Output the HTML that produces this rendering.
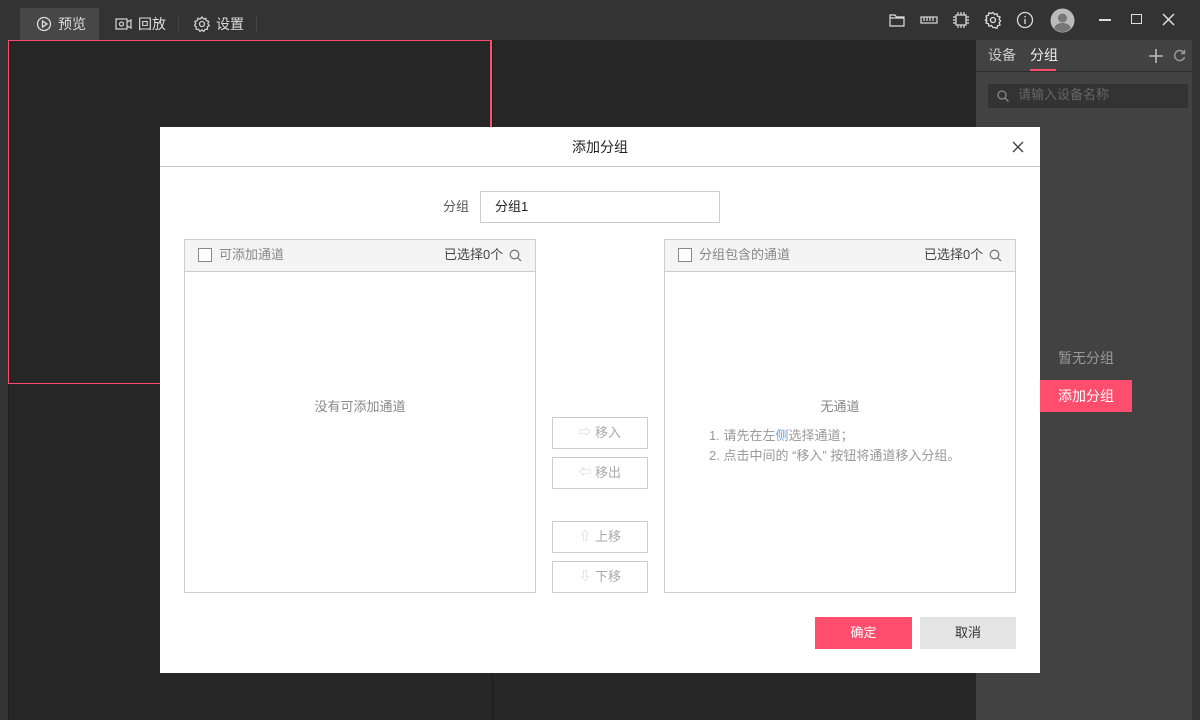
<!DOCTYPE html>
<html><head><meta charset="utf-8"><style>
*{margin:0;padding:0;box-sizing:border-box}
body{width:1200px;height:720px;overflow:hidden;background:#262626;font-family:"Liberation Sans","Noto Sans CJK SC",sans-serif;font-size:13px;line-height:1.3;position:relative}
.a{position:absolute}
.top{left:0;top:0;width:1200px;height:40px;background:#333}
.tab{top:8px;height:32px;color:#ddd;font-size:14px;display:flex;align-items:center;gap:6px}
.sep{top:16px;width:1px;height:16px;background:#444}
.ic{top:11px;width:18px;height:18px}
.dlg{left:160px;top:127px;width:880px;height:546px;background:#fff}
.btn{left:392px;width:96px;height:32px;border:1px solid #ccc;color:#aaa;display:flex;align-items:center;justify-content:center;gap:4px;font-size:13px}
.box{width:352px;height:354px;border:1px solid #ccc;top:112px}
.hd{left:0;top:0;width:350px;height:32px;background:#f4f4f4;border-bottom:1px solid #ccc}
.cb{left:13px;top:8px;width:14px;height:14px;border:1px solid #888;background:#fff}
</style></head><body>
<div class="a top"></div>
<div class="a" style="left:20px;top:8px;width:79px;height:32px;background:#474747"></div>
<div class="a tab" style="left:36px"><svg width="16" height="16" viewBox="0 0 16 16" fill="none" stroke="#ddd" stroke-width="1.3"><circle cx="8" cy="8" r="6.5"/><path d="M6.5 5v6l4.5-3z"/></svg>预览</div>
<div class="a tab" style="left:115px"><svg width="17" height="14" viewBox="0 0 17 14" fill="none" stroke="#ccc" stroke-width="1.3"><rect x="1" y="2" width="11" height="10"/><circle cx="6.5" cy="7" r="2"/><path d="M12 5l4-2v8l-4-2"/></svg>回放</div>
<div class="a sep" style="left:178px"></div>
<div class="a tab" style="left:194px"><svg width="16" height="16" viewBox="0 0 16 16" fill="none" stroke="#ccc" stroke-width="1.3"><circle cx="8" cy="8" r="2.5"/><path d="M8 1l1.5 2 2.3-.7.6 2.3 2.3.8-.8 2.3 1.4 1.9-2 1.3.1 2.4-2.4.1-1.2 2.1L8 13.9 6 15.5 4.6 13.4l-2.4-.1.1-2.4-2-1.3 1.4-1.9-.8-2.3 2.3-.8.6-2.3 2.3.7z"/></svg>设置</div>
<div class="a sep" style="left:256px"></div>
<svg class="a ic" style="left:888px" viewBox="0 0 18 18" fill="none" stroke="#ddd" stroke-width="1.2"><path d="M2 4h5l1.5 2H16v9H2z M2 7h14"/></svg>
<svg class="a ic" style="left:920px" viewBox="0 0 18 18" fill="none" stroke="#ddd" stroke-width="1.2"><rect x="1" y="6" width="16" height="6"/><path d="M4 6v4M7 6v4M10 6v4M13 6v4"/></svg>
<svg class="a ic" style="left:952px" viewBox="0 0 18 18" fill="none" stroke="#ddd" stroke-width="1.2"><rect x="4" y="4" width="10" height="10"/><path d="M6 1v3M9 1v3M12 1v3M6 14v3M9 14v3M12 14v3M1 6h3M1 9h3M1 12h3M14 6h3M14 9h3M14 12h3"/></svg>
<svg class="a ic" style="left:984px" viewBox="0 0 18 18" fill="none" stroke="#ddd" stroke-width="1.3"><circle cx="9" cy="9" r="2.5"/><path d="M9 1.5l1.6 2 2.4-.7.6 2.4 2.4.8-.8 2.4 1.4 1.6-1.4 1.6.8 2.4-2.4.8-.6 2.4-2.4-.7L9 16.5l-1.6-2-2.4.7-.6-2.4-2.4-.8.8-2.4L1.4 9l1.4-1.6L2 5l2.4-.8.6-2.4 2.4.7z"/></svg>
<svg class="a ic" style="left:1016px" viewBox="0 0 18 18" fill="none" stroke="#ddd" stroke-width="1.3"><circle cx="9" cy="9" r="7.5"/><path d="M9 8v5M9 5v1.5"/></svg>
<svg class="a" style="left:1050px;top:8px" width="25" height="25" viewBox="0 0 25 25"><circle cx="12.5" cy="12.5" r="12" fill="#bbb"/><circle cx="12.5" cy="10" r="4.5" fill="#777"/><path d="M4 20c2-4 5-5 8.5-5s6.5 1 8.5 5c-2.5 2.5-5 4-8.5 4S6 22.5 4 20z" fill="#777"/></svg>
<div class="a" style="left:1099px;top:19px;width:12px;height:1.5px;background:#ddd"></div>
<div class="a" style="left:1131px;top:14px;width:11px;height:10px;border:1.5px solid #ddd"></div>
<svg class="a" style="left:1162px;top:13px" width="13" height="13" viewBox="0 0 13 13" stroke="#ddd" stroke-width="1.5"><path d="M1 1l11 11M12 1L1 12"/></svg>
<div class="a" style="left:0;top:40px;width:8px;height:680px;background:#333"></div>
<div class="a" style="left:8px;top:40px;width:484px;height:344px;border:1px solid #ff4d6d;border-right-width:2px"></div>
<div class="a" style="left:492px;top:40px;width:1px;height:680px;background:#1c1c1c"></div>
<div class="a" style="left:8px;top:384px;width:1px;height:336px;background:#1c1c1c"></div>
<div class="a" style="left:976px;top:40px;width:216px;height:680px;background:#424242"></div>
<div class="a" style="left:1192px;top:40px;width:8px;height:680px;background:#333"></div>
<div class="a" style="left:976px;top:71px;width:216px;height:1px;background:#2e2e2e"></div>
<div class="a" style="left:988px;top:46px;color:#ccc;font-size:14px">设备</div>
<div class="a" style="left:1030px;top:46px;color:#eee;font-size:14px">分组</div>
<div class="a" style="left:1030px;top:69px;width:26px;height:2px;background:#ff4d6d"></div>
<svg class="a" style="left:1149px;top:49px" width="14" height="14" viewBox="0 0 14 14" stroke="#bbb" stroke-width="1.6"><path d="M7 0v14M0 7h14"/></svg>
<svg class="a" style="left:1173px;top:49px" width="13" height="13" viewBox="0 0 13 13" fill="none" stroke="#999" stroke-width="1.5"><path d="M11 4A5 5 0 1 0 11.5 8M11.5 1v3.5H8"/></svg>
<div class="a" style="left:988px;top:84px;width:200px;height:24px;background:#333"></div>
<svg class="a" style="left:997px;top:90px" width="12" height="12" viewBox="0 0 12 12" fill="none" stroke="#888" stroke-width="1.3"><circle cx="5" cy="5" r="4"/><path d="M8 8l3.5 3.5"/></svg>
<div class="a" style="left:1018px;top:87px;color:#666;font-size:13px">请输入设备名称</div>
<div class="a" style="left:1058px;top:349px;color:#999;font-size:14px">暂无分组</div>
<div class="a" style="left:1040px;top:380px;width:92px;height:32px;background:#ff4d6d;color:#fff;font-size:14px;line-height:32px;padding-left:18px">添加分组</div>
<div class="a dlg">
 <div class="a" style="left:0;top:0;width:880px;height:40px;border-bottom:1px solid #ccc;text-align:center;line-height:40px;font-size:14px;color:#222">添加分组</div>
 <svg class="a" style="left:852px;top:14px" width="12" height="12" viewBox="0 0 12 12" stroke="#444" stroke-width="1.4"><path d="M1 1l10 10M11 1L1 11"/></svg>
 <div class="a" style="left:283px;top:72px;color:#555">分组</div>
 <div class="a" style="left:320px;top:64px;width:240px;height:32px;border:1px solid #ccc;padding-left:14px;line-height:29px;color:#222">分组1</div>
 <div class="a box" style="left:24px">
  <div class="a hd"><div class="a cb"></div><div class="a" style="left:34px;top:7px;color:#888">可添加通道</div><div class="a" style="left:259px;top:7px;color:#444">已选择0个</div>
  <svg class="a" style="left:324px;top:9px" width="13" height="13" viewBox="0 0 13 13" fill="none" stroke="#777" stroke-width="1.3"><circle cx="5.5" cy="5.5" r="4.3"/><path d="M8.7 8.7l3.3 3.3"/></svg></div>
  <div class="a" style="left:0;width:350px;top:159px;text-align:center;color:#888">没有可添加通道</div>
 </div>
 <div class="a box" style="left:504px">
  <div class="a hd"><div class="a cb"></div><div class="a" style="left:34px;top:7px;color:#888">分组包含的通道</div><div class="a" style="left:259px;top:7px;color:#444">已选择0个</div>
  <svg class="a" style="left:324px;top:9px" width="13" height="13" viewBox="0 0 13 13" fill="none" stroke="#777" stroke-width="1.3"><circle cx="5.5" cy="5.5" r="4.3"/><path d="M8.7 8.7l3.3 3.3"/></svg></div>
  <div class="a" style="left:0;width:350px;top:159px;text-align:center;color:#888">无通道</div>
  <div class="a" style="left:44px;top:186px;color:#999;line-height:20px">1. 请先在左<span style="color:#6aa0e0">侧</span>选择通道；<br>2. 点击中间的 “移入” 按钮将通道移入分组。</div>
 </div>
 <div class="a btn" style="top:290px"><span style="font-size:12px;color:#ccc">⇨</span>移入</div>
 <div class="a btn" style="top:330px"><span style="font-size:12px;color:#ccc">⇦</span>移出</div>
 <div class="a btn" style="top:394px"><span style="font-size:12px;color:#ccc">⇧</span>上移</div>
 <div class="a btn" style="top:434px"><span style="font-size:12px;color:#ccc">⇩</span>下移</div>
 <div class="a" style="left:655px;top:490px;width:97px;height:32px;background:#ff4d6d;color:#fff;text-align:center;line-height:32px">确定</div>
 <div class="a" style="left:760px;top:490px;width:96px;height:32px;background:#e4e4e4;color:#333;text-align:center;line-height:32px">取消</div>
</div>
</body></html>
